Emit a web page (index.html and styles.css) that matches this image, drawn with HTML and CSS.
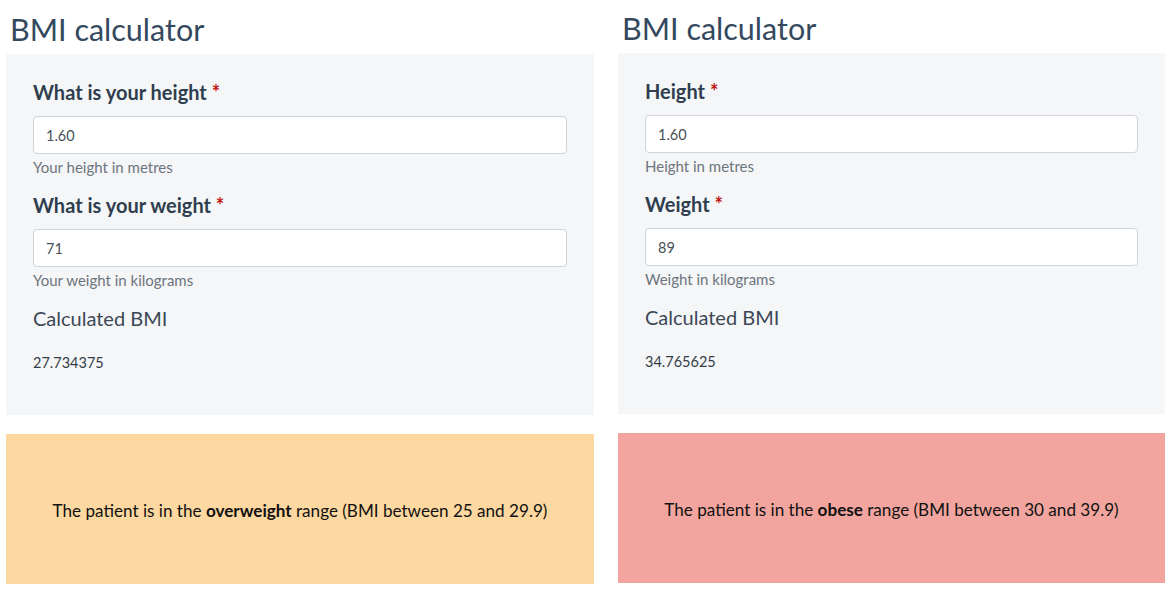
FILE: index.html
```html
<!DOCTYPE html>
<html lang="en">
<head>
<meta charset="utf-8">
<title>BMI calculator</title>
<link rel="stylesheet" href="styles.css">
</head>
<body>
<div class="page">
  <section class="calc calc-wide">
    <h1 class="title">BMI calculator</h1>
    <div class="panel">
      <div class="group">
        <label class="label" for="h1">What is your height <span class="req">*</span></label>
        <input class="input" id="h1" type="text" value="1.60">
        <div class="help">Your height in metres</div>
      </div>
      <div class="group">
        <label class="label" for="w1">What is your weight <span class="req">*</span></label>
        <input class="input" id="w1" type="text" value="71">
        <div class="help">Your weight in kilograms</div>
      </div>
      <div class="result-title">Calculated BMI</div>
      <div class="result-value">27.734375</div>
    </div>
    <div class="alert alert-over"><p class="alert-text">The patient is in the <b>overweight</b> range (BMI between 25 and 29.9)</p></div>
  </section>
  <section class="calc calc-narrow">
    <h1 class="title">BMI calculator</h1>
    <div class="panel">
      <div class="group">
        <label class="label" for="h2">Height <span class="req">*</span></label>
        <input class="input" id="h2" type="text" value="1.60">
        <div class="help">Height in metres</div>
      </div>
      <div class="group">
        <label class="label" for="w2">Weight <span class="req">*</span></label>
        <input class="input" id="w2" type="text" value="89">
        <div class="help">Weight in kilograms</div>
      </div>
      <div class="result-title">Calculated BMI</div>
      <div class="result-value">34.765625</div>
    </div>
    <div class="alert alert-obese"><p class="alert-text">The patient is in the <b>obese</b> range (BMI between 30 and 39.9)</p></div>
  </section>
</div>
</body>
</html>
```
FILE: styles.css
```css
* { box-sizing: border-box; }
html, body { margin: 0; padding: 0; background: #fff; }
body { font-family: Lato, "Noto Sans", sans-serif; color: #333; }

.page {
  display: grid;
  grid-template-columns: 588px 547px;
  column-gap: 24px;
  padding: 0 6px;
}
.calc { display: flex; flex-direction: column; }
.calc-narrow { margin-top: -1px; }

.title {
  margin: 11px 0 7px 4px;
  font-size: 30.5px;
  line-height: 36px;
  font-weight: 400;
  color: #34495e;
}

.panel {
  background: #f5f6f8;
  padding: 26px 27px 43px;
  height: 361px;
}
.group { margin-bottom: 16px; }
.label {
  display: block;
  font-size: 20px;
  line-height: 24px;
  font-weight: 700;
  color: #2f3e4e;
  margin-bottom: 12px;
}
.req { color: #c0150f; }
.input {
  display: block;
  width: 100%;
  height: 38px;
  border: 1px solid #ced4da;
  border-radius: 4px;
  background: #fff;
  padding: 0 12px;
  font-family: inherit;
  font-size: 14.5px;
  color: #495057;
  outline: none;
}
.help {
  margin-top: 3px;
  font-size: 15px;
  line-height: 20px;
  color: #6c757d;
}
.result-title {
  font-size: 20px;
  line-height: 24px;
  color: #3b4856;
  margin-bottom: 22px;
}
.result-value {
  font-size: 14.5px;
  line-height: 21px;
  color: #333d48;
}

.alert {
  margin-top: 19px;
  height: 150px;
  padding-top: 4px;
  display: flex;
  align-items: center;
  justify-content: center;
  color: #111;
}
.alert-text {
  margin: 0;
  font-size: 17.1px;
  line-height: 24px;
}
.alert-text b { font-weight: 700; }
.alert-over { background: #fdd8a0; }
.alert-obese { background: #f2a59e; }
```
